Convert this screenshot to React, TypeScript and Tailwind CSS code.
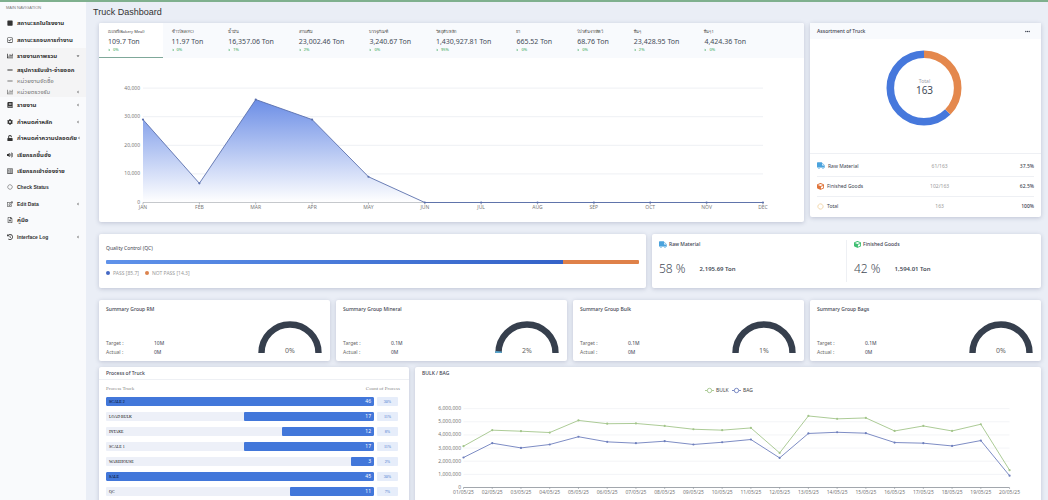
import { useState } from "react";
import {
  FaSquare,
  FaRegCheckSquare,
  FaChartBar,
  FaMinus,
  FaBook,
  FaCog,
  FaUnlock,
  FaVolumeUp,
  FaRegListAlt,
  FaRegEdit,
  FaRegFileAlt,
  FaHistory,
  FaAngleLeft,
  FaAngleDown,
  FaTruck,
  FaEllipsisH,
  FaCaretRight,
  FaCube,
} from "react-icons/fa";
import { TbCircleDashed } from "react-icons/tb";

const topMenu = [
  { icon: FaSquare, label: "สถานะรถในโรงงาน", thai: true },
  { icon: FaRegCheckSquare, label: "สถานะรถจบการทำงาน", thai: true },
];

const subMenu = [
  { icon: FaMinus, label: "สรุปการรับเข้า-จ่ายออก", thai: true, active: true },
  { icon: FaMinus, label: "หน่วยงานจัดซื้อ", thai: true },
  { icon: FaChartBar, label: "หน่วยตรวจรับ", thai: true, more: true },
];

const bottomMenu = [
  { icon: FaBook, label: "รายงาน", thai: true, more: true },
  { icon: FaCog, label: "กำหนดค่าหลัก", thai: true, more: true },
  { icon: FaUnlock, label: "กำหนดค่าความปลอดภัย", thai: true, more: true },
  { icon: FaVolumeUp, label: "เรียกรถขึ้นชั่ง", thai: true },
  { icon: FaRegListAlt, label: "เรียกรถเข้าช่องจ่าย", thai: true },
  { icon: TbCircleDashed, label: "Check Status" },
  { icon: FaRegEdit, label: "Edit Data", more: true },
  { icon: FaRegFileAlt, label: "คู่มือ", thai: true },
  { icon: FaHistory, label: "Interface Log", more: true },
];

const tabs = [
  { name: "เบเกอรี่(Bakery Meal)", ton: "109.7", percent: 0 },
  { name: "ข้าวโพด(YC)", ton: "11.97", percent: 0 },
  { name: "น้ำมัน", ton: "16,357.06", percent: 1 },
  { name: "สารเสริม", ton: "23,002.46", percent: 2 },
  { name: "บรรจุภัณฑ์", ton: "3,240.67", percent: 0 },
  { name: "วัตถุดิบหลัก", ton: "1,430,927.81", percent: 95 },
  { name: "ยา", ton: "665.52", percent: 0 },
  { name: "โปรตีนจากสัตว์", ton: "68.76", percent: 0 },
  { name: "อื่นๆ", ton: "23,428.95", percent: 2 },
  { name: "อื่นๆ1", ton: "4,424.36", percent: 0 },
];

const months = ["JAN", "FEB", "MAR", "APR", "MAY", "JUN", "JUL", "AUG", "SEP", "OCT", "NOV", "DEC"];
const monthly = [29000, 6700, 36000, 29000, 9000, 0, 0, 0, 0, 0, 0, 0];

const summary = [
  { name: "RM", target: "10M", percent: 0 },
  { name: "Mineral", target: "0.1M", percent: 2 },
  { name: "Bulk", target: "0.1M", percent: 1 },
  { name: "Bags", target: "0.1M", percent: 0 },
];

const processes = [
  { name: "SCALE 2", count: 46, percent: 30, width: 100 },
  { name: "LOAD BULK", count: 17, percent: 11, width: 48.6 },
  { name: "INTAKE", count: 12, percent: 8, width: 34.2 },
  { name: "SCALE 1", count: 17, percent: 11, width: 48.6 },
  { name: "WAREHOUSE", count: 3, percent: 2, width: 8.5 },
  { name: "SALE", count: 45, percent: 30, width: 100 },
  { name: "QC", count: 11, percent: 7, width: 31.4 },
];

const bulk = [3.14, 4.36, 4.28, 4.18, 5.1, 4.85, 4.87, 4.68, 4.43, 4.36, 4.53, 2.63, 5.44, 5.22, 5.29, 4.3, 4.68, 4.3, 4.81, 1.32];
const bag = [2.28, 3.37, 3.01, 3.27, 3.86, 3.47, 3.37, 3.52, 3.27, 3.44, 3.65, 2.25, 4.11, 4.2, 4.13, 3.42, 3.37, 3.16, 3.57, 0.9];

const card = "bg-white rounded-[2px] shadow-[0_1px_4px_rgba(60,70,110,0.25)]";

function MenuItem({ item, small }: any) {
  const Icon = item.icon;
  return (
    <li className="flex flex-1 min-h-0">
      <a
        href="#"
        className={`flex flex-1 items-center pl-[7px] pr-1.5 ${
          small && !item.active ? "text-[#777] font-normal" : "text-[#333] font-bold"
        }`}
      >
        <Icon className="w-1.5 h-1.5 mr-1 shrink-0" />
        <span className={`flex-1 whitespace-nowrap ${item.thai ? "text-[6px]" : "text-[5px]"}`}>{item.label}</span>
        {item.open && <FaAngleDown className="w-1 h-1 shrink-0" />}
        {item.more && <FaAngleLeft className="w-1 h-1 shrink-0 text-[#666]" />}
      </a>
    </li>
  );
}

function Sidebar() {
  return (
    <nav className="w-[86px] shrink-0 bg-[#f9fafc] text-[5px] leading-[8px] font-['Liberation_Sans','Noto_Sans_Thai',sans-serif]">
      <h2 className="h-3 leading-[12px] pl-1.5 text-[4px] text-[#777]">MAIN NAVIGATION</h2>
      <ul className="flex flex-col h-[34px]">
        {topMenu.map((item) => (
          <MenuItem key={item.label} item={item} />
        ))}
      </ul>
      <div className="bg-[#f4f4f5]">
        <ul className="flex flex-col h-4">
          <MenuItem item={{ icon: FaChartBar, label: "รายงานภาพรวม", thai: true, open: true }} />
        </ul>
        <ul className="flex flex-col h-[33px]">
          {subMenu.map((item) => (
            <MenuItem key={item.label} item={item} small />
          ))}
        </ul>
      </div>
      <ul className="flex flex-col h-[148px]">
        {bottomMenu.map((item) => (
          <MenuItem key={item.label} item={item} />
        ))}
      </ul>
    </nav>
  );
}

function MonthlyChart() {
  const x = (i: number) => 44 + i * 56.36;
  const y = (v: number) => 144.5 - v * 0.00286;
  const points = monthly.map((v, i) => `${x(i)},${y(v)}`).join(" ");
  return (
    <svg viewBox="0 0 705 164" className="block w-full text-[5px]" fill="#777">
      <defs>
        <linearGradient id="area" x1="0" y1="0" x2="0" y2="1">
          <stop offset="0" stopColor="#6c8ee6" />
          <stop offset="1" stopColor="#fff" />
        </linearGradient>
      </defs>
      {[0, 10000, 20000, 30000, 40000].map((v) => (
        <g key={v}>
          <line x1="44" x2="664" y1={y(v)} y2={y(v)} stroke={v ? "#eef0f4" : "#8a9098"} strokeWidth="1" />
          <text x="41" y={y(v) + 1.5} textAnchor="end">
            {v.toLocaleString("en-US")}
          </text>
        </g>
      ))}
      <polygon points={`44,144.5 ${points} 664,144.5`} fill="url(#area)" />
      <polyline points={points} fill="none" stroke="#5b70ad" strokeWidth="0.9" />
      {months.map((m, i) => (
        <g key={m}>
          <line x1={x(i)} x2={x(i)} y1="144.5" y2="146.5" stroke="#8a9098" strokeWidth="0.6" />
          <circle cx={x(i)} cy={y(monthly[i])} r="1.1" fill="#5b70ad" />
          <text x={x(i)} y="151" textAnchor="middle">
            {m}
          </text>
        </g>
      ))}
    </svg>
  );
}

function TruckTabs() {
  const [active, setActive] = useState(0);
  return (
    <section className={`col-span-9 overflow-hidden ${card}`}>
      <div role="tablist" className="flex h-[35px] bg-[#f8fafd]">
        {tabs.map((tab, i) => (
          <button
            key={tab.name}
            role="tab"
            aria-selected={active === i}
            onClick={() => setActive(i)}
            className={`flex flex-col items-start pl-[9px] pr-4 first:pr-[18px] pt-[5px] whitespace-nowrap ${
              active === i ? "bg-white border-b border-[#7fa89a]" : ""
            }`}
          >
            <span className="text-[4px] leading-[8px] text-[#444]">{tab.name}</span>
            <span className="text-[7px] leading-[11px] text-[#444b57]">{tab.ton} Ton</span>
            <span className="flex items-center gap-0.5 text-[4px] leading-[5px] font-medium text-[#4fb06c]">
              <FaCaretRight className="w-[3px] h-1" />
              {tab.percent}%
            </span>
          </button>
        ))}
      </div>
      <MonthlyChart />
    </section>
  );
}

function Assortment() {
  const rows = [
    { icon: FaTruck, color: "w-2 text-[#4ba3dd]", name: "Raw Material", count: "61/163", percent: "37.5%" },
    { icon: FaCube, color: "w-[7px] text-[#e0743a]", name: "Finished Goods", count: "102/163", percent: "62.5%" },
    { icon: TbCircleDashed, color: "w-[7px] text-[#e8b96a]", name: "Total", count: "163", percent: "100%" },
  ];
  return (
    <section className={`col-span-3 ${card}`}>
      <header className="flex items-center justify-between h-4 px-[7px] bg-[#f8fafd]">
        <h2 className="font-medium">Assortment of Truck</h2>
        <button aria-label="More" className="pr-1">
          <FaEllipsisH className="w-[5px] h-[5px]" />
        </button>
      </header>
      <div className="h-[115px] pt-[11px] pr-[3px] border-b border-[#eef0f4]">
        <svg viewBox="0 0 76 76" className="block w-[76px] mx-auto">
          <circle
            cx="38"
            cy="38"
            r="33.7"
            fill="none"
            stroke="#4678dc"
            strokeWidth="7.6"
            pathLength="100"
            strokeDasharray="62.5 37.5"
            strokeDashoffset="-37.5"
            transform="rotate(-90 38 38)"
          />
          <circle
            cx="38"
            cy="38"
            r="33.7"
            fill="none"
            stroke="#e4884d"
            strokeWidth="7.6"
            pathLength="100"
            strokeDasharray="37.5 62.5"
            transform="rotate(-90 38 38)"
          />
          <text x="38.5" y="33" textAnchor="middle" fill="#a0a0a8" className="text-[5px]">
            Total
          </text>
          <text x="38.5" y="44" textAnchor="middle" fill="#444b57" className="text-[10px]">
            163
          </text>
        </svg>
      </div>
      <div className="px-[7px] pt-0.5 pb-px">
        <table className="w-full">
          <tbody>
            {rows.map((row) => (
              <tr key={row.name} className="h-5 border-b border-[#eef0f4] last:border-0">
                <td className="w-[43%]">
                  <span className="flex items-center gap-[3px]">
                    <row.icon className={`h-[7px] ${row.color}`} />
                    {row.name}
                  </span>
                </td>
                <td className="text-center text-[#999]">{row.count}</td>
                <td className="w-[30%] text-right font-medium">{row.percent}</td>
              </tr>
            ))}
          </tbody>
        </table>
      </div>
    </section>
  );
}

function QualityControl() {
  return (
    <section className={`col-span-7 h-[54px] px-[7px] pt-2.5 ${card}`}>
      <h2 className="leading-[8px]">Quality Control (QC)</h2>
      <div className="flex h-1 mt-2 rounded-[1px] overflow-hidden">
        <div className="w-[85.7%] bg-linear-to-r from-[#5f92ea] to-[#3462c8]" />
        <div className="flex-1 bg-[#df8149]" />
      </div>
      <div className="flex items-center gap-1.5 mt-[5px] leading-[8px] text-[#999]">
        <span className="flex items-center gap-[3px]">
          <i className="w-1 h-1 rounded-full bg-[#4468c4]" />
          PASS [85.7]
        </span>
        <span className="flex items-center gap-[3px]">
          <i className="w-1 h-1 rounded-full bg-[#dc834e]" />
          NOT PASS [14.3]
        </span>
      </div>
    </section>
  );
}

function Share({ icon, name, percent, ton }: any) {
  return (
    <div className="flex-1 pl-[7px]">
      <h2 className="flex items-center gap-0.5 leading-[8px] font-medium">
        {icon}
        {name}
      </h2>
      <p className="flex items-center gap-3.5 mt-[13px] leading-[16px]">
        <span className="text-[12px] font-light text-[#444b57]">{percent} %</span>
        <span className="text-[6px] font-semibold text-[#444b57]">{ton} Ton</span>
      </p>
    </div>
  );
}

function Summary({ item }: any) {
  return (
    <section className={`col-span-3 flex justify-between h-[61px] pl-[7px] pr-2 pt-[5px] ${card}`}>
      <div className="flex flex-col justify-between pb-1">
        <h2 className="leading-[8px] font-medium">Summary Group {item.name}</h2>
        <dl className="grid grid-cols-[48px_1fr] leading-[9px]">
          <dt className="text-[#666]">Target :</dt>
          <dd>{item.target}</dd>
          <dt className="text-[#666]">Actual :</dt>
          <dd>0M</dd>
        </dl>
      </div>
      <svg viewBox="0 0 64 34" className="w-16 h-[34px] mt-4">
        <path d="M3.5 32A28.5 28.5 0 0 1 60.5 32" fill="none" stroke="#363f4d" strokeWidth="6.4" />
        {item.percent > 1 && (
          <path
            d="M3.5 32A28.5 28.5 0 0 1 60.5 32"
            fill="none"
            stroke="#58a6cf"
            strokeWidth="6.4"
            pathLength="100"
            strokeDasharray={`${item.percent} 100`}
          />
        )}
        <text x="32" y="32" textAnchor="middle" fill="#666" className="text-[7px]">
          {item.percent}%
        </text>
      </svg>
    </section>
  );
}

function ProcessOfTruck() {
  return (
    <section className={`col-span-4 h-[150px] ${card}`}>
      <h2 className="h-[13px] leading-[13px] px-[7px] font-medium border-b border-[#eef0f4]">Process of Truck</h2>
      <table className="w-full border-separate border-spacing-0 font-['Liberation_Serif',serif]">
        <thead>
          <tr className="h-[17px] text-[#888]">
            <th className="pl-[7px] text-left font-normal">Process Truck</th>
            <th className="pr-[9px] text-right font-normal whitespace-nowrap" colSpan={2}>
              Count of Process
            </th>
          </tr>
        </thead>
        <tbody>
          {processes.map((p) => (
            <tr key={p.name} className="h-[15px] leading-[9px] align-top">
              <td className="pl-[7px]" colSpan={2}>
                <div className="relative flex justify-end h-[9px] rounded-[1px] bg-[#edf0f8] overflow-hidden">
                  <span className="absolute left-[3px] top-0 text-[4px] text-black">{p.name}</span>
                  <div
                    className="rounded-[1px] bg-[#4277da] pr-[3px] text-right text-white font-['Noto_Sans',sans-serif]"
                    style={{ width: `${p.width}%` }}
                  >
                    {p.count}
                  </div>
                </div>
              </td>
              <td className="w-[35px] pl-[3px] pr-[11px]">
                <div className="h-[9px] rounded-[1px] bg-[#e6edfa] text-[4px] text-center text-[#3f6fca]">{p.percent}%</div>
              </td>
            </tr>
          ))}
        </tbody>
      </table>
    </section>
  );
}

function BulkBag() {
  const x = (i: number) => 48.5 + i * 28.74;
  const y = (v: number) => 107.5 - v * 13.15;
  const series = [
    { name: "BULK", data: bulk, color: "#a3c58a", at: 290 },
    { name: "BAG", data: bag, color: "#6e7fbd", at: 317 },
  ];
  return (
    <section className={`col-span-8 h-[150px] ${card}`}>
      <h2 className="h-[13px] leading-[13px] px-[7px] font-medium">BULK / BAG</h2>
      <svg viewBox="0 0 626 120" className="block w-full text-[5px]" fill="#777">
        {[0, 1, 2, 3, 4, 5, 6].map((v) => (
          <g key={v}>
            <line x1="48.5" x2="594.5" y1={y(v)} y2={y(v)} stroke={v ? "#f0f1f5" : "#8a9098"} strokeWidth="0.8" />
            <text x="46" y={y(v) + 1.5} textAnchor="end">
              {(v * 1000000).toLocaleString("en-US")}
            </text>
          </g>
        ))}
        {bulk.map((_, i) => (
          <g key={i}>
            <line x1={x(i)} x2={x(i)} y1="107.5" y2="109" stroke="#8a9098" strokeWidth="0.6" />
            <text x={x(i)} y="114" textAnchor="middle">
              {String(i + 1).padStart(2, "0")}/05/25
            </text>
          </g>
        ))}
        {series.map((s) => (
          <g key={s.name}>
            <polyline points={s.data.map((v, i) => `${x(i)},${y(v)}`).join(" ")} fill="none" stroke={s.color} strokeWidth="0.9" />
            {s.data.map((v, i) => (
              <circle key={i} cx={x(i)} cy={y(v)} r="1.1" fill={s.color} />
            ))}
            <line x1={s.at} x2={s.at + 9} y1="10.5" y2="10.5" stroke={s.color} strokeWidth="0.9" />
            <circle cx={s.at + 4.5} cy="10.5" r="2.2" fill="#fff" stroke={s.color} strokeWidth="0.9" />
            <text x={s.at + 11} y="12" fill="#444">
              {s.name}
            </text>
          </g>
        ))}
      </svg>
    </section>
  );
}

export default function App() {
  return (
    <div className="flex h-screen overflow-hidden border-t-2 border-[#7fb08e] bg-[#eaeef6] text-[#3d4350]">
      <Sidebar />
      <main className="flex-1 min-w-0 pl-[13px] pr-[7px] text-[5px] leading-[8px] font-['Noto_Sans',sans-serif]">
        <h1 className="-ml-1.5 h-[21px] leading-[21px] text-[9px] text-[#333] font-['Liberation_Sans',sans-serif]">
          Truck Dashboard
        </h1>
        <div className="grid grid-cols-12 gap-x-1.5 items-start mb-3">
          <TruckTabs />
          <Assortment />
        </div>
        <div className="grid grid-cols-12 gap-x-1.5 mb-3">
          <QualityControl />
          <section className={`col-span-5 flex py-1.5 ${card}`}>
            <Share
              icon={<FaTruck className="w-2 h-[7px] text-[#4ba3dd]" />}
              name="Raw Material"
              percent={58}
              ton="2,195.69"
            />
            <div className="w-px bg-[#eef0f4]" />
            <Share
              icon={<FaCube className="w-[7px] h-[7px] text-[#3fbf72]" />}
              name="Finished Goods"
              percent={42}
              ton="1,594.01"
            />
          </section>
        </div>
        <div className="grid grid-cols-12 gap-x-1.5 mb-1.5">
          {summary.map((item) => (
            <Summary key={item.name} item={item} />
          ))}
        </div>
        <div className="grid grid-cols-12 gap-x-1.5">
          <ProcessOfTruck />
          <BulkBag />
        </div>
      </main>
    </div>
  );
}
